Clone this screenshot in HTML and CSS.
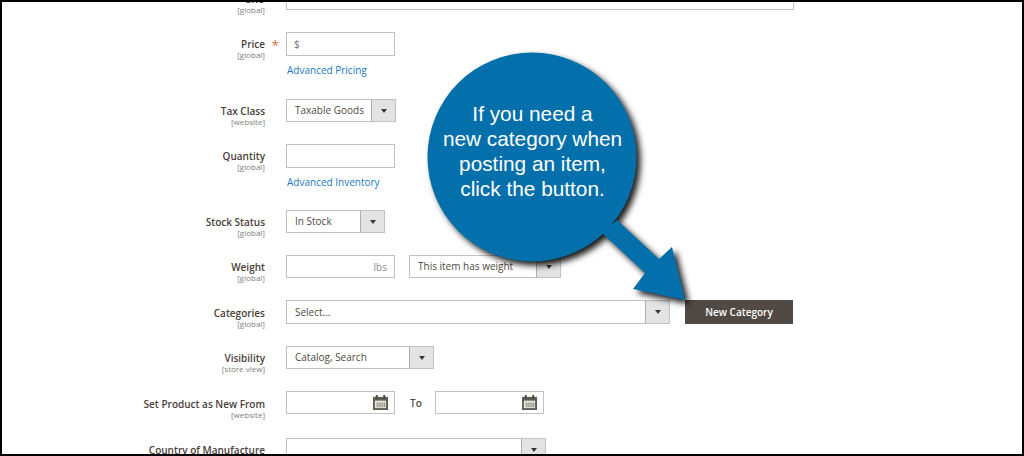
FILE: index.html
```html
<!DOCTYPE html>
<html lang="en">
<head>
<meta charset="utf-8">
<title>New Product</title>
<link rel="stylesheet" href="styles.css">
</head>
<body>
<main class="frame">
  <form class="form">
    <div class="row row-first">
      <div class="label"><span class="name">SKU</span><span class="scope">[global]</span></div>
      <div class="control"><div class="input input-full"></div></div>
    </div>
    <div class="row">
      <div class="label"><span class="name">Price</span><span class="scope">[global]</span><span class="req">*</span></div>
      <div class="control">
        <div class="input input-sm"><span class="prefix">$</span></div>
        <a class="link">Advanced Pricing</a>
      </div>
    </div>
    <div class="row">
      <div class="label"><span class="name">Tax Class</span><span class="scope">[website]</span></div>
      <div class="control"><div class="select sel-tax"><span class="value">Taxable Goods</span><span class="arrow"></span></div></div>
    </div>
    <div class="row">
      <div class="label"><span class="name">Quantity</span><span class="scope">[global]</span></div>
      <div class="control">
        <div class="input input-sm"></div>
        <a class="link">Advanced Inventory</a>
      </div>
    </div>
    <div class="row">
      <div class="label"><span class="name">Stock Status</span><span class="scope">[global]</span></div>
      <div class="control"><div class="select sel-stock"><span class="value">In Stock</span><span class="arrow"></span></div></div>
    </div>
    <div class="row">
      <div class="label"><span class="name">Weight</span><span class="scope">[global]</span></div>
      <div class="control inline">
        <div class="input input-sm input-unit"><span class="unit">lbs</span></div>
        <div class="select sel-weight"><span class="value">This item has weight</span><span class="arrow"></span></div>
      </div>
    </div>
    <div class="row">
      <div class="label label-low"><span class="name">Categories</span><span class="scope">[global]</span></div>
      <div class="control inline">
        <div class="select sel-cat"><span class="value">Select...</span><span class="arrow"></span></div>
        <button class="btn" type="button">New Category</button>
      </div>
    </div>
    <div class="row">
      <div class="label"><span class="name">Visibility</span><span class="scope">[store view]</span></div>
      <div class="control"><div class="select sel-vis"><span class="value">Catalog, Search</span><span class="arrow"></span></div></div>
    </div>
    <div class="row">
      <div class="label label-low"><span class="name">Set Product as New From</span><span class="scope">[website]</span></div>
      <div class="control inline">
        <div class="input input-sm input-date">
          <svg class="cal" viewBox="0 0 16 16"><path class="cal-body" d="M0 2h16v14H0z"/><path class="cal-page" d="M2 6h12v8H2z"/><path class="cal-top" d="M3 0h2v4H3zM11 0h2v4h-2z"/><path class="cal-grid" d="M4 8h1v5H4zM6 8h1v5H6zM8 8h1v5H8zM10 8h1v5h-1zM12 8h1v5h-1z"/></svg>
        </div>
        <span class="to">To</span>
        <div class="input input-sm input-date">
          <svg class="cal" viewBox="0 0 16 16"><path class="cal-body" d="M0 2h16v14H0z"/><path class="cal-page" d="M2 6h12v8H2z"/><path class="cal-top" d="M3 0h2v4H3zM11 0h2v4h-2z"/><path class="cal-grid" d="M4 8h1v5H4zM6 8h1v5H6zM8 8h1v5H8zM10 8h1v5h-1zM12 8h1v5h-1z"/></svg>
        </div>
      </div>
    </div>
    <div class="row">
      <div class="label"><span class="name">Country of Manufacture</span></div>
      <div class="control"><div class="select sel-country"><span class="value"></span><span class="arrow"></span></div></div>
    </div>
  </form>
  <aside class="callout">
    <svg class="callout-shape" viewBox="0 0 280 270">
      <circle cx="105" cy="104" r="104.500"/>
      <polygon points="190,167 232,206 245,194 258,247 206,236 218,220 175,180"/>
    </svg>
    <p class="callout-text">If you need a<br>new category when<br>posting an item,<br>click the button.</p>
  </aside>
</main>
</body>
</html>
```
FILE: styles.css
```css
* { box-sizing: border-box; }
html, body { margin: 0; padding: 0; }
body { background: #fff; font-family: "Open Sans", sans-serif; color: #41362f; }
.frame { position: relative; width: 1024px; height: 456px; border: 2px solid #000; overflow: hidden; background: #fff; }
.form { display: flex; flex-direction: column; gap: 22px; }
.row { display: flex; align-items: flex-start; gap: 21px; }
.row-first { margin-top: -16px; }
.row-first .label { padding-top: 6px; }
.label { position: relative; flex: 0 0 263px; height: 23px; display: flex; flex-direction: column; align-items: flex-end; padding-top: 5px; }
.label-low { padding-top: 6px; }
.name { font-size: 10px; font-weight: 600; line-height: 14px; color: #4a403a; white-space: nowrap; }
.scope { font-size: 8px; line-height: 9px; margin-top: -1px; color: #808080; white-space: nowrap; }
.req { position: absolute; right: -14px; top: 5px; font-size: 13px; line-height: 16px; color: #e0643a; }
.control { display: flex; flex-direction: column; align-items: flex-start; }
.inline { flex-direction: row; align-items: flex-start; }
.input { height: 24px; border: 1px solid #c2c2c2; background: #fff; display: flex; align-items: center; }
.input-full { width: 508px; }
.input-sm { width: 109px; }
.prefix { margin-left: 7px; font-size: 10px; color: #6f6f6f; }
.input-unit { height: 23px; justify-content: flex-end; margin-right: 14px; }
.unit { margin-right: 7px; font-size: 10px; color: #8a8a8a; }
.link { height: 20.500px; padding-left: 1px; font-size: 10px; line-height: 29px; color: #1979c3; }
.select { display: flex; height: 23px; border: 1px solid #c2c2c2; background: #fff; }
.value { flex: 1; padding-left: 8px; font-size: 10px; line-height: 20px; color: #514943; white-space: nowrap; overflow: hidden; }
.arrow { position: relative; flex: 0 0 24px; background: #e3e3e3; border-left: 1px solid #adadad; }
.arrow::after { content: ""; position: absolute; left: 9px; top: 9px; border: 3px solid transparent; border-top: 4px solid #41362f; border-bottom: 0; }
.sel-tax { width: 110px; }
.sel-stock { width: 99px; }
.sel-weight { width: 152px; }
.sel-cat { width: 384px; height: 24px; margin-right: 15px; }
.sel-cat .value { line-height: 23px; }
.sel-vis { width: 148px; }
.sel-country { width: 260px; }
.btn { width: 108px; height: 24px; padding: 0; border: 0; border-radius: 0; background: #514943; color: #fff; font-family: "Open Sans", sans-serif; font-size: 10px; font-weight: 600; }
.input-date { height: 23px; justify-content: flex-end; }
.cal { width: 15px; height: 15px; margin-right: 6px; }
.cal-body { fill: #5f5c52; }
.cal-page { fill: #e9e7da; }
.cal-top { fill: #4a4740; }
.cal-grid { fill: #7d7d7d; }
.to { width: 40px; padding-left: 15px; font-size: 10px; font-weight: 600; line-height: 25px; color: #514943; }
.callout { position: absolute; left: 425px; top: 51px; width: 280px; height: 270px; }
.callout-shape { display: block; width: 280px; height: 270px; overflow: visible; fill: #0370ab; filter: drop-shadow(4px 4px 3px rgba(0,0,0,.9)); }
.callout-text { position: absolute; left: 0; top: 48px; width: 211px; margin: 0; text-align: center; font-family: "Liberation Sans", Arial, sans-serif; font-size: 20.800px; line-height: 25px; color: #fff; }
```
